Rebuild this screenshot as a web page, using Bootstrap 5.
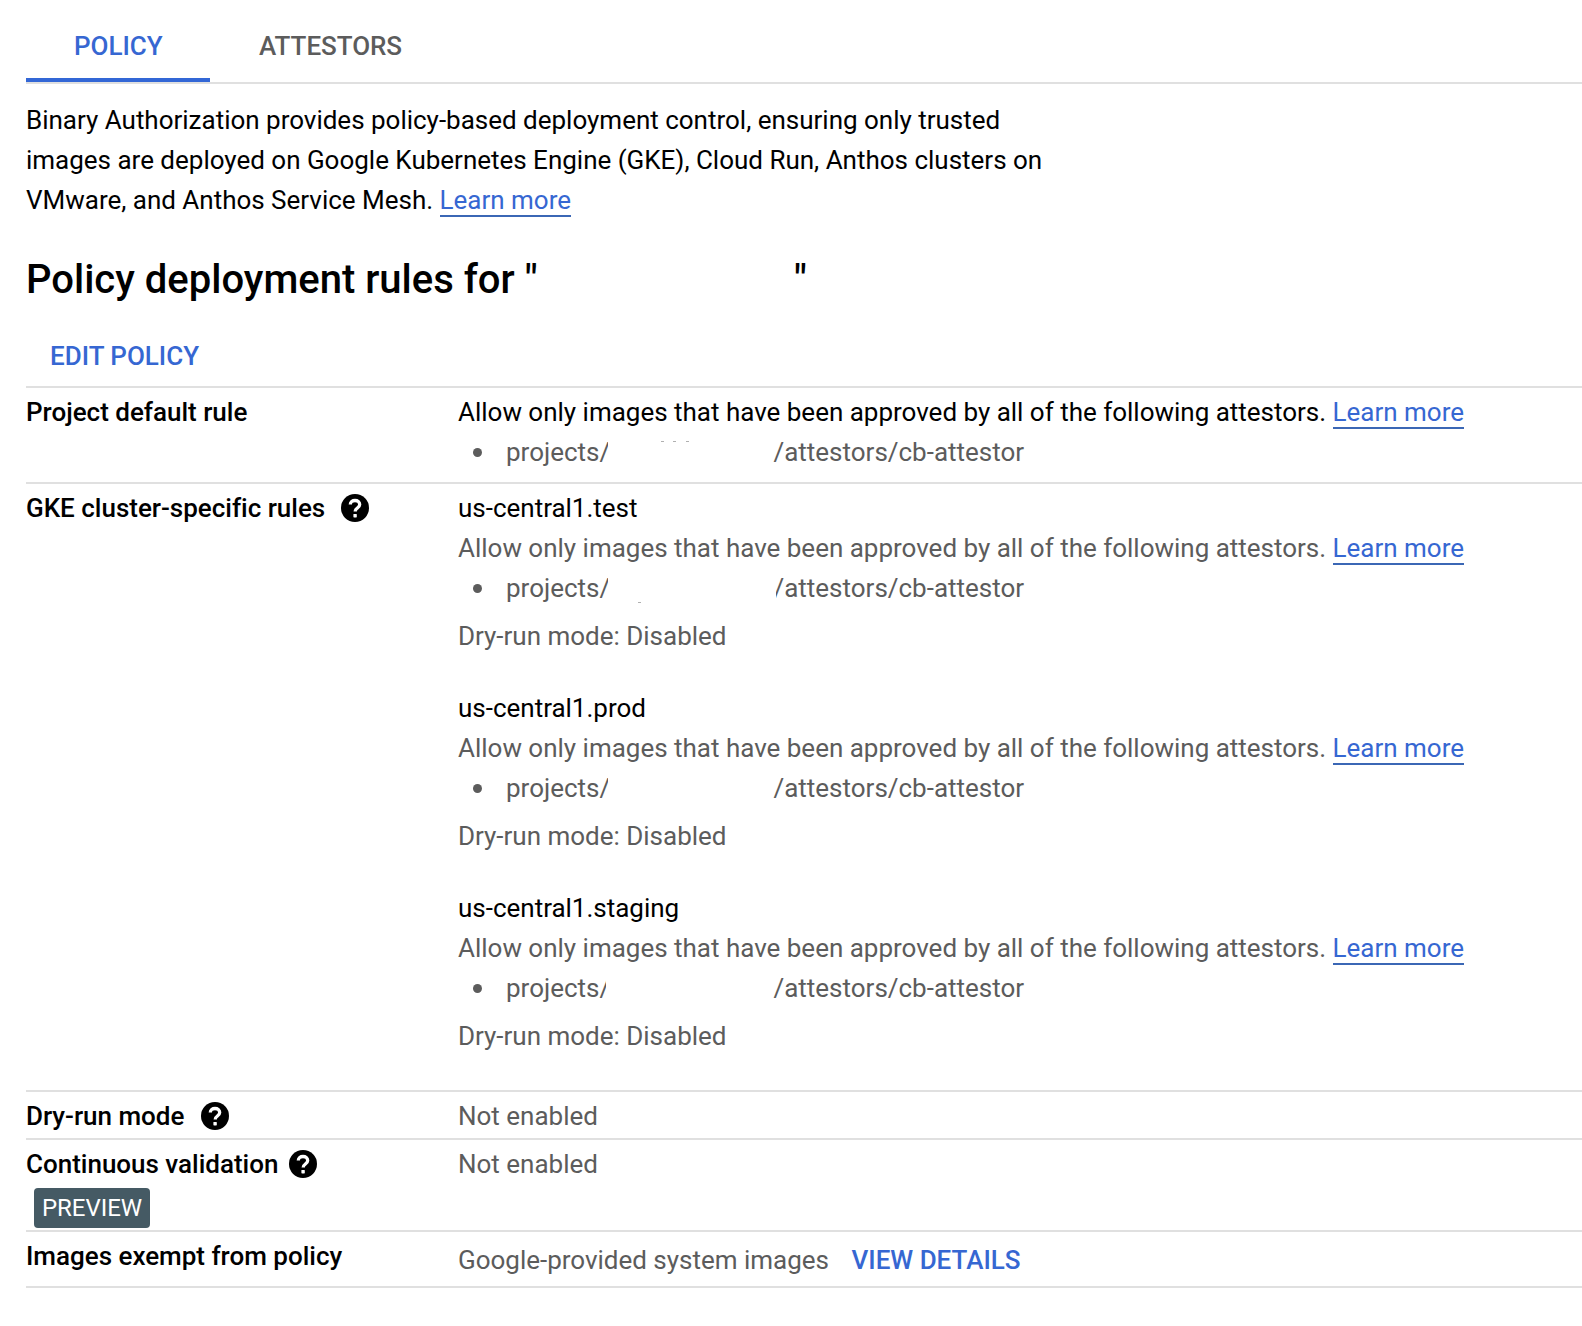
<!DOCTYPE html>
<html lang="en">
<head>
<meta charset="utf-8">
<meta name="viewport" content="width=device-width, initial-scale=1">
<title>Binary Authorization</title>
<link rel="stylesheet" href="https://cdn.jsdelivr.net/npm/bootstrap@5.3.0/dist/css/bootstrap.min.css">
<style>
  body { font-family: Roboto, "Liberation Sans", sans-serif; font-size: 26px; line-height: 40px; letter-spacing: -0.01px; color: #000; background: #fff; overflow-x: hidden; }
  .page-shell { padding-left: 26px; }
  .policy-tabs { height: 84px; border-bottom: 2px solid #e0e0e0; }
  .policy-tabs .nav-link { height: 82px; padding: 26px 47px 0 49px; border-bottom: 4px solid transparent; color: #5c5c5c; font-weight: 500; line-height: 40px; letter-spacing: -0.05px; }
  .policy-tabs .nav-link.active { width: 184px; padding-left: 48px; color: #3667d2; border-bottom-color: #3367d6; }
  .intro-text { width: 1040px; margin: 16px 0 0; }
  .doc-link { color: #3667d2; text-decoration: none; background: linear-gradient(#3b67b5, #3b67b5) 0 100% / 100% 2px no-repeat; padding-bottom: 2px; }
  .rules-title { font-size: 40px; line-height: 56px; letter-spacing: 0; font-weight: 500; margin: 32px 0 0; }
  .title-gap { display: inline-block; width: 256.5px; }
  .action-link { color: #3667d2; font-weight: 500; text-decoration: none; }
  .edit-action { margin: 28px 0 0 24px; height: 50px; }
  .rule-row { border-top: 2px solid #e0e0e0; padding: 4px 0; }
  .rule-default { height: 96px; }
  .rule-clusters { height: 608px; }
  .rule-dryrun { height: 48px; }
  .rule-validation { height: 92px; }
  .rule-exempt { height: 58px; border-bottom: 2px solid #e0e0e0; }
  .rule-label { width: 432px; flex: none; font-weight: 500; }
  .muted-text { color: #5c5c5c; }
  .path-list { list-style: none; margin: 0; padding-left: 48px; color: #5c5c5c; }
  .path-list li { position: relative; height: 40px; white-space: nowrap; }
  .path-list li::before { content: ""; position: absolute; left: -33px; top: 15.5px; width: 9px; height: 9px; border-radius: 50%; background: #5c5c5c; }
  .path-head { display: inline-block; width: 102px; }
  .path-tail { margin-left: 165.5px; }
  .path-mask { position: absolute; top: 0; width: 10px; height: 40px; background: #fff; }
  .mask-edge { left: 102px; }
  .mask-head { left: 100px; }
  .mask-tail { left: 260px; }
  .speck { position: absolute; width: 3px; height: 1px; background: #b0b0b0; }
  .cluster-rule { margin-bottom: 32px; }
  .help-icon { width: 28px; height: 28px; flex: none; margin: 6px 0 0 16px; }
  .help-icon.wide { margin-left: 17px; }
  .help-icon.near { margin-left: 11px; }
  .preview-tag { display: block; width: 116px; height: 40px; margin: 4px 0 -2px 8px; background: #455a64; color: #fff; border-radius: 4px; font-size: 24px; font-weight: 400; line-height: 40px; text-align: center; }
  .details-link { margin-left: 22.5px; }
</style>
</head>
<body>
<svg class="d-none" xmlns="http://www.w3.org/2000/svg">
  <symbol id="help" viewBox="0 0 28 28"><circle cx="14" cy="14" r="14" fill="#000"/><path d="M9.300 10.600C9.300 7.900 11.400 6.500 14 6.500s4.700 1.500 4.700 4.100c0 3.400-4.500 3.500-4.500 6.800" fill="none" stroke="#fff" stroke-width="3.300"/><rect x="12.400" y="20" width="3.400" height="3.400" rx=".6" fill="#fff"/></symbol>
</svg>
<main class="page-shell">
  <nav class="nav policy-tabs">
    <a class="nav-link active" href="#">POLICY</a>
    <a class="nav-link" href="#">ATTESTORS</a>
  </nav>
  <p class="intro-text">Binary Authorization provides policy-based deployment control, ensuring only trusted<br>images are deployed on Google Kubernetes Engine (GKE), Cloud Run, Anthos clusters on<br>VMware, and Anthos Service Mesh. <a class="doc-link" href="#">Learn more</a></p>
  <h1 class="rules-title text-nowrap">Policy deployment rules for "<span class="title-gap"></span>"</h1>
  <div class="edit-action"><a class="action-link" href="#">EDIT POLICY</a></div>

  <section class="rule-row rule-default d-flex">
    <div class="rule-label">Project default rule</div>
    <div class="text-nowrap">Allow only images that have been approved by all of the following attestors. <a class="doc-link" href="#">Learn more</a>
      <ul class="path-list">
        <li><span class="path-head">projects/</span><span class="path-tail">/attestors/cb-attestor</span><i class="path-mask mask-edge"></i><i class="speck" style="left:155px;top:9px"></i><i class="speck" style="left:167px;top:9px"></i><i class="speck" style="left:180px;top:9px"></i></li>
      </ul>
    </div>
  </section>

  <section class="rule-row rule-clusters d-flex">
    <div class="rule-label d-flex align-items-start"><span>GKE cluster-specific rules</span><svg class="help-icon"><use href="#help"/></svg></div>
    <div class="text-nowrap">
      <div class="cluster-rule">
        <div>us-central1.test</div>
        <div class="muted-text">Allow only images that have been approved by all of the following attestors. <a class="doc-link" href="#">Learn more</a></div>
        <ul class="path-list"><li><span class="path-head">projects/</span><span class="path-tail">/attestors/cb-attestor</span><i class="path-mask mask-edge"></i><i class="path-mask mask-tail"></i><i class="speck" style="left:132px;top:34px"></i></li></ul>
        <div class="muted-text mt-2">Dry-run mode: Disabled</div>
      </div>
      <div class="cluster-rule">
        <div>us-central1.prod</div>
        <div class="muted-text">Allow only images that have been approved by all of the following attestors. <a class="doc-link" href="#">Learn more</a></div>
        <ul class="path-list"><li><span class="path-head">projects/</span><span class="path-tail">/attestors/cb-attestor</span><i class="path-mask mask-edge"></i></li></ul>
        <div class="muted-text mt-2">Dry-run mode: Disabled</div>
      </div>
      <div class="cluster-rule">
        <div>us-central1.staging</div>
        <div class="muted-text">Allow only images that have been approved by all of the following attestors. <a class="doc-link" href="#">Learn more</a></div>
        <ul class="path-list"><li><span class="path-head">projects/</span><span class="path-tail">/attestors/cb-attestor</span><i class="path-mask mask-head"></i></li></ul>
        <div class="muted-text mt-2">Dry-run mode: Disabled</div>
      </div>
    </div>
  </section>

  <section class="rule-row rule-dryrun d-flex">
    <div class="rule-label d-flex align-items-start"><span>Dry-run mode</span><svg class="help-icon wide"><use href="#help"/></svg></div>
    <div class="muted-text">Not enabled</div>
  </section>

  <section class="rule-row rule-validation d-flex">
    <div class="rule-label">
      <div class="d-flex align-items-start"><span>Continuous validation</span><svg class="help-icon near"><use href="#help"/></svg></div>
      <span class="preview-tag">PREVIEW</span>
    </div>
    <div class="muted-text">Not enabled</div>
  </section>

  <section class="rule-row rule-exempt d-flex">
    <div class="rule-label">Images exempt from policy</div>
    <div class="d-flex pt-1"><span class="muted-text">Google-provided system images</span><a class="action-link details-link" href="#">VIEW DETAILS</a></div>
  </section>
</main>
<script src="https://cdn.jsdelivr.net/npm/bootstrap@5.3.0/dist/js/bootstrap.bundle.min.js"></script>
</body>
</html>
